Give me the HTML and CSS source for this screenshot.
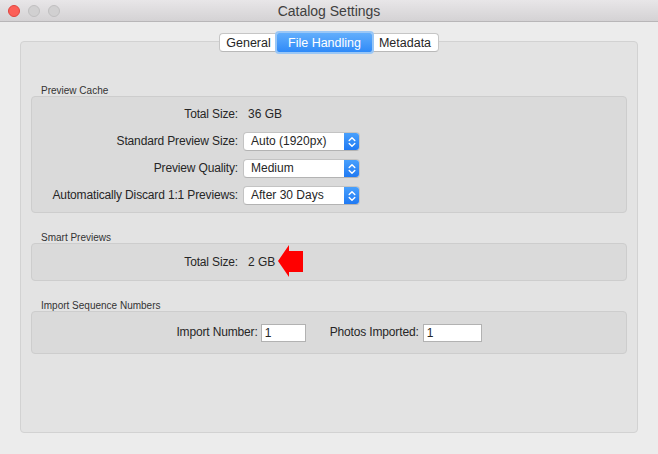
FILE: index.html
```html
<!DOCTYPE html>
<html>
<head>
<meta charset="utf-8">
<link rel="stylesheet" href="styles.css">
</head>
<body>
<div class="window">
  <div class="titlebar">
    <div class="lights">
      <span class="light red"></span>
      <span class="light grey"></span>
      <span class="light grey"></span>
    </div>
    <div class="title">Catalog Settings</div>
    <div></div>
  </div>
  <div class="content">
    <div class="tabbox">
      <div class="tabs">
        <span class="tab first">General</span>
        <span class="tab active">File Handling</span>
        <span class="tab last">Metadata</span>
      </div>

      <div class="section first-section">
        <div class="section-label">Preview Cache</div>
        <div class="group form preview">
          <div class="lbl">Total Size:</div>
          <div class="val">36 GB</div>
          <div class="lbl">Standard Preview Size:</div>
          <div class="select"><span class="sel-text">Auto (1920px)</span><span class="stepper"><svg width="8" height="12" viewBox="0 0 8 12"><path d="M1.2 4.6 L4 1.8 L6.8 4.6 M1.2 7.4 L4 10.2 L6.8 7.4" fill="none" stroke="#fff" stroke-width="1.4" stroke-linecap="round" stroke-linejoin="round"/></svg></span></div>
          <div class="lbl">Preview Quality:</div>
          <div class="select"><span class="sel-text">Medium</span><span class="stepper"><svg width="8" height="12" viewBox="0 0 8 12"><path d="M1.2 4.6 L4 1.8 L6.8 4.6 M1.2 7.4 L4 10.2 L6.8 7.4" fill="none" stroke="#fff" stroke-width="1.4" stroke-linecap="round" stroke-linejoin="round"/></svg></span></div>
          <div class="lbl">Automatically Discard 1:1 Previews:</div>
          <div class="select"><span class="sel-text">After 30 Days</span><span class="stepper"><svg width="8" height="12" viewBox="0 0 8 12"><path d="M1.2 4.6 L4 1.8 L6.8 4.6 M1.2 7.4 L4 10.2 L6.8 7.4" fill="none" stroke="#fff" stroke-width="1.4" stroke-linecap="round" stroke-linejoin="round"/></svg></span></div>
        </div>
      </div>

      <div class="section">
        <div class="section-label">Smart Previews</div>
        <div class="group form smart">
          <div class="lbl">Total Size:</div>
          <div class="val arrow-val">2 GB<svg class="arrow" width="25" height="32" viewBox="0 0 25 32"><polygon points="0,16 11,0 11,6 25,6 25,27 11,27 11,32" fill="#ff0000"/></svg></div>
        </div>
      </div>

      <div class="section">
        <div class="section-label">Import Sequence Numbers</div>
        <div class="group import">
          <span class="lbl">Import Number:</span>
          <span class="input num1">1</span>
          <span class="lbl photos">Photos Imported:</span>
          <span class="input num2">1</span>
        </div>
      </div>
    </div>
  </div>
</div>
</body>
</html>
```

FILE: styles.css
```css
* { box-sizing: border-box; }
html, body { margin: 0; padding: 0; }
body {
  font-family: "Liberation Sans", Arial, sans-serif;
  color: #262626;
  background: #ececec;
}
.window {
  width: 658px;
  height: 454px;
  display: flex;
  flex-direction: column;
  background: #ececec;
  overflow: hidden;
}
.titlebar {
  height: 22px;
  flex: none;
  display: grid;
  grid-template-columns: 1fr auto 1fr;
  align-items: center;
  background: linear-gradient(#e8e6e8, #d4d2d4);
  border-bottom: 1px solid #b8b6b8;
}
.lights {
  display: flex;
  gap: 8px;
  padding-left: 8px;
  align-items: center;
}
.light {
  width: 12px;
  height: 12px;
  border-radius: 50%;
  display: block;
}
.light.red { background: #fc5f57; border: 1px solid #e0443e; }
.light.grey { background: #d1d0d1; border: 1px solid #c0bfc0; }
.title {
  font-size: 14px;
  color: #404040;
  padding-top: 1px;
}
.content {
  flex: 1;
  display: flex;
  flex-direction: column;
  padding: 19px 20px 21px 20px;
}
.tabbox {
  flex: 1;
  background: #e3e3e3;
  border: 1px solid #d2d2d2;
  border-radius: 4px;
  padding: 0 10px;
  display: flex;
  flex-direction: column;
}
.tabs {
  margin-top: -9px;
  height: 19px;
  display: flex;
  justify-content: center;
  align-items: stretch;
}
.tab {
  display: flex;
  align-items: center;
  justify-content: center;
  font-size: 12.5px;
  color: #262626;
  background: #fff;
  border-top: 1px solid #c6c6c6;
  border-bottom: 1px solid #b8b8b8;
}
.tab.first {
  width: 58px;
  border-left: 1px solid #c6c6c6;
  border-radius: 4px 0 0 4px;
}
.tab.last {
  width: 67px;
  border-right: 1px solid #c6c6c6;
  border-radius: 0 4px 4px 0;
}
.tab.active {
  width: 95px;
  color: #fff;
  background: linear-gradient(#62aefc, #2f8af8);
  border: none;
  border-radius: 2px;
  box-shadow: 0 0 0 2px #9ac7f6;
  position: relative;
}
.section-label {
  font-size: 10px;
  line-height: 11px;
  height: 11px;
  padding-left: 10px;
  color: #333;
}
.section { margin-top: 19px; }
.section.first-section { margin-top: 33px; }
.group {
  background: #dadada;
  border: 1px solid #cdcdcd;
  border-radius: 4px;
}
.form {
  display: grid;
  grid-template-columns: 206px 1fr;
  column-gap: 5px;
  row-gap: 8px;
  align-items: center;
}
.preview { padding: 8px 0 7px 0; }
.smart { padding: 9px 0 8px 0; }
.lbl {
  font-size: 12px;
  letter-spacing: -0.15px;
  text-align: right;
  line-height: 19px;
  white-space: nowrap;
}
.val {
  font-size: 12px;
  line-height: 19px;
  padding-left: 5px;
}
.arrow-val {
  display: flex;
  align-items: center;
  height: 19px;
}
.arrow {
  margin-left: 3px;
  margin-top: -3px;
  flex: none;
}
.select {
  width: 117px;
  height: 19px;
  display: flex;
  background: #fff;
  border: 1px solid #c3c3c3;
  border-bottom-color: #b3b3b3;
  border-radius: 4px;
  overflow: hidden;
}
.sel-text {
  flex: 1;
  font-size: 12px;
  line-height: 17px;
  padding-left: 7px;
  white-space: nowrap;
}
.stepper {
  width: 16px;
  flex: none;
  display: flex;
  align-items: center;
  justify-content: center;
  background: linear-gradient(#4aa2fd, #1d77f2);
  margin: -1px -1px -1px 0;
}
.import {
  display: flex;
  justify-content: center;
  align-items: center;
  padding: 11px 0 11px 0;
}
.import .lbl { line-height: 19px; }
.input {
  height: 18px;
  background: #fff;
  border: 1px solid #b2b2b2;
  font-size: 12px;
  line-height: 16px;
  padding-left: 3px;
}
.num1 { width: 45px; margin-left: 3px; }
.photos { margin-left: 24px; }
.num2 { width: 59px; margin-left: 4px; }
```
